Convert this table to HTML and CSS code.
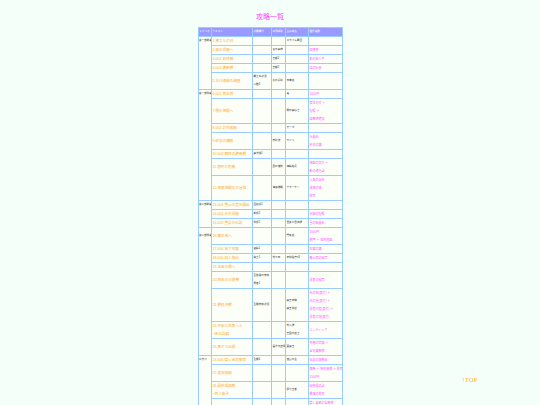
FILE: index.html
```html
<!DOCTYPE html>
<html lang="ja">
<head>
<meta charset="utf-8">
<title>クエスト一覧</title>
<link rel="stylesheet" href="styles.css">
</head>
<body>
<h1 class="title">攻略一覧</h1>
<table class="list">
<colgroup><col class="c1"><col class="c2"><col class="c3"><col class="c4"><col class="c5"><col class="c6"></colgroup>
<tr><th>シナリオ</th><th>クエスト</th><th>必要戦力</th><th>出現場所</th><th>主な敵名</th><th>獲得報酬</th></tr>
<tr><td class="g" rowspan="5">第一部前編</td><td class="o">1.旅立ちの日</td><td></td><td></td><td>スライム軍団</td><td class="p"></td></tr>
<tr><td class="o">2.森の洞窟へ</td><td></td><td>東の森林</td><td></td><td class="p">回復薬</td></tr>
<tr><td class="o">3.001 初任務</td><td></td><td>王都2</td><td></td><td class="p">銅の剣入手</td></tr>
<tr><td class="o">4.003 護衛戦</td><td></td><td>王都2</td><td></td><td class="p">革の防具</td></tr>
<tr><td class="o">5.古代遺跡の調査</td><td>戦士系必須<br>人数3</td><td>北の遺跡</td><td>石像兵</td><td class="p"></td></tr>
<tr><td class="g" rowspan="7">第一部後編</td><td class="o">6.001 再出発</td><td></td><td></td><td>竜</td><td class="p">1000円</td></tr>
<tr><td class="o">7.闇の神殿へ</td><td></td><td></td><td>闇の魔導士</td><td class="p">魔法の杖 ＋<br>指輪 ＋<br>経験値増加</td></tr>
<tr><td class="o">8.002 討伐依頼</td><td></td><td></td><td>オーガ</td><td class="p"></td></tr>
<tr><td class="o">9.砂漠の横断</td><td></td><td>南砂漠</td><td>サソリ</td><td class="p">水晶石<br>砂漠の鍵</td></tr>
<tr><td class="o">10.002 商隊の護衛戦</td><td>魔法職1</td><td></td><td></td><td class="p"></td></tr>
<tr><td class="o">11.港町の危機</td><td></td><td>西の港町</td><td>海賊船長</td><td class="p">海図の欠片 ＋<br>船の通行証</td></tr>
<tr><td class="o">12.海底神殿の大冒険</td><td></td><td>海底神殿</td><td>クラーケン</td><td class="p">人魚の涙石<br>海神の槍<br>称号</td></tr>
<tr><td class="g" rowspan="3">第二部前編</td><td class="o">13.003 雪山の登頂開始</td><td>回復役1</td><td></td><td></td><td class="p"></td></tr>
<tr><td class="o">14.001 氷の洞窟</td><td>前衛2</td><td></td><td></td><td class="p">氷結の指輪</td></tr>
<tr><td class="o">15.002 雪女の伝説</td><td>後衛1</td><td></td><td>雪女と雪狼達</td><td class="p">雪の結晶石</td></tr>
<tr><td class="g mid" rowspan="8">第二部後編</td><td class="o">16.魔王城へ</td><td></td><td></td><td>門番兵</td><td class="p">1000円<br>鉄門 ＋ 城内地図</td></tr>
<tr><td class="o">17.004 地下牢獄</td><td>盗賊1</td><td></td><td></td><td class="p">牢獄の鍵</td></tr>
<tr><td class="o">18.005 囚人救出</td><td>騎士1</td><td>地下牢</td><td>牢獄看守x3</td><td class="p">騎士団の紋章</td></tr>
<tr><td class="o">19.玉座の間へ</td><td></td><td></td><td></td><td class="p"></td></tr>
<tr><td class="o">20.四天王の襲撃</td><td>全職業の参加<br>勇者1</td><td></td><td></td><td class="p">勇者の紋章</td></tr>
<tr><td class="o">21.最終決戦</td><td>全員参加必須</td><td></td><td>魔王本体<br>魔王側近</td><td class="p">光の剣(真打) ＋<br>光の盾(真打) ＋<br>勇者の鎧(真打) ＋<br>勇者の冠(真打)</td></tr>
<tr><td class="o">22.平和な世界へと<br>~後日談編</td><td></td><td></td><td>村人達<br>王国の兵士</td><td class="p">エンディング</td></tr>
<tr><td class="o">23.裏ボス出現</td><td></td><td>異次元空間</td><td>裏魔王</td><td class="p">究極の武器 ＋<br>全実績解放</td></tr>
<tr><td class="g" rowspan="4">おまけ</td><td class="o">24.006 隠し迷宮探索</td><td>全員4</td><td></td><td>迷宮の主</td><td class="p">伝説の装飾品</td></tr>
<tr><td class="o">25.追加依頼</td><td></td><td></td><td></td><td class="p">報酬 ＋ 特別装備 ＋ 称号<br>1500円</td></tr>
<tr><td class="o">26.闘技場挑戦<br>~百人抜き</td><td></td><td></td><td>歴代王者</td><td class="p">闘技場の証<br>最強の称号</td></tr>
<tr><td class="o">27.全要素達成</td><td></td><td></td><td></td><td class="p">隠し要素の全解放<br>特典映像<br>記念称号</td></tr>
</table>
<a class="top" href="#">↑TOP</a>
</body>
</html>
```
FILE: styles.css
```css
body {
  margin: 0;
  background: #f5fffa;
  font-family: "Liberation Sans", "Noto Sans CJK JP", sans-serif;
}
.title {
  margin: 12px 0 5px;
  text-align: center;
  font-size: 7px;
  line-height: 10px;
  font-weight: normal;
  color: #ff44ff;
}
.list {
  margin: 0 auto;
  border-collapse: collapse;
  table-layout: fixed;
  width: 145px;
  background: #fcfff8;
}
.c1 { width: 13px; }
.c2 { width: 41px; }
.c3 { width: 19px; }
.c4 { width: 14px; }
.c5 { width: 23px; }
.c6 { width: 34px; }
.list th,
.list td {
  border: 1px solid #99ccff;
  padding: 0 0 0 1px;
  line-height: 8px;
  font-size: 2.6px;
  color: #333;
  white-space: nowrap;
  overflow: hidden;
  text-align: left;
  font-weight: normal;
  vertical-align: middle;
}
.list th {
  background: #9999ff;
  color: #fff;
}
.list td.g {
  vertical-align: top;
  padding-left: 0.5px;
}
.list td.mid {
  padding-top: 4px;
}
.list td.o {
  color: #ffaa33;
  font-size: 3.6px;
}
.list td.p {
  color: #ff55ff;
  font-size: 3px;
}
.top {
  position: fixed;
  right: 63px;
  bottom: 22px;
  font-family: "Liberation Serif", serif;
  font-size: 6.5px;
  line-height: 7px;
  color: #ffaa33;
  text-decoration: none;
}
```
